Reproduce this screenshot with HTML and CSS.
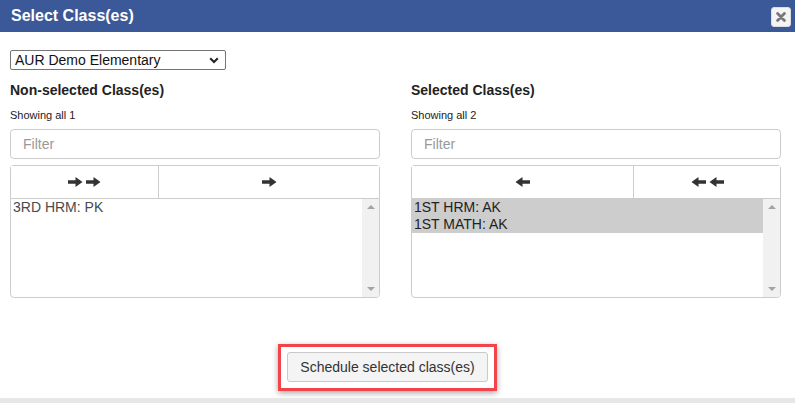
FILE: index.html
```html
<!DOCTYPE html>
<html>
<head>
<meta charset="utf-8">
<link rel="stylesheet" href="styles.css">
</head>
<body>
<div class="dialog">
  <div class="header">
    <span class="title">Select Class(es)</span>
    <button class="close" aria-label="close">
      <svg width="10" height="10" viewBox="0 0 10 10"><path d="M1.6 1.6L8.4 8.4M8.4 1.6L1.6 8.4" stroke="#777" stroke-width="2.8" stroke-linecap="round"/></svg>
    </button>
  </div>
  <div class="content">
    <div class="school">
      <span class="school-name">AUR Demo Elementary</span>
      <svg class="chev" width="10" height="7" viewBox="0 0 10 7"><path d="M1.2 1.2L5 5L8.8 1.2" stroke="#222" stroke-width="2" fill="none"/></svg>
    </div>
    <div class="columns">
      <div class="col">
        <div class="col-title">Non-selected Class(es)</div>
        <div class="info">Showing all 1</div>
        <div class="filter">Filter</div>
        <div class="btn-group">
          <div class="btn narrow">
            <svg width="15" height="10" viewBox="0 0 15 10"><path d="M0 3.3H7.5V0L14.5 5L7.5 10V6.7H0Z" fill="#333"/></svg>
            <svg class="second" width="15" height="10" viewBox="0 0 15 10"><path d="M0 3.3H7.5V0L14.5 5L7.5 10V6.7H0Z" fill="#333"/></svg>
          </div>
          <div class="btn wide">
            <svg width="15" height="10" viewBox="0 0 15 10"><path d="M0 3.3H7.5V0L14.5 5L7.5 10V6.7H0Z" fill="#333"/></svg>
          </div>
        </div>
        <div class="listbox">
          <div class="items">
            <div class="item">3RD HRM: PK</div>
          </div>
          <div class="scrollbar"><span class="up"></span><span class="down"></span></div>
        </div>
      </div>
      <div class="col">
        <div class="col-title">Selected Class(es)</div>
        <div class="info">Showing all 2</div>
        <div class="filter">Filter</div>
        <div class="btn-group">
          <div class="btn wide">
            <svg width="15" height="10" viewBox="0 0 15 10"><path d="M15 3.3H7.5V0L0.5 5L7.5 10V6.7H15Z" fill="#333"/></svg>
          </div>
          <div class="btn narrow">
            <svg width="15" height="10" viewBox="0 0 15 10"><path d="M15 3.3H7.5V0L0.5 5L7.5 10V6.7H15Z" fill="#333"/></svg>
            <svg class="second" width="15" height="10" viewBox="0 0 15 10"><path d="M15 3.3H7.5V0L0.5 5L7.5 10V6.7H15Z" fill="#333"/></svg>
          </div>
        </div>
        <div class="listbox">
          <div class="items">
            <div class="item sel">1ST HRM: AK</div>
            <div class="item sel">1ST MATH: AK</div>
          </div>
          <div class="scrollbar"><span class="up"></span><span class="down"></span></div>
        </div>
      </div>
    </div>
    <div class="footer">
      <div class="highlight">
        <button class="schedule">Schedule selected class(es)</button>
      </div>
    </div>
  </div>
  <div class="bottom-strip"></div>
</div>
</body>
</html>
```
FILE: styles.css
```css
* { box-sizing: border-box; }
html, body { margin: 0; padding: 0; background: #fff; }
body { font-family: "Liberation Sans", Arial, sans-serif; color: #333; width: 795px; height: 403px; overflow: hidden; }
.dialog { display: flex; flex-direction: column; height: 403px; }
.header {
  height: 32px; background: #3b5998; display: flex; align-items: center;
  justify-content: space-between; padding: 0 4px 0 11px;
}
.title { color: #fff; font-weight: bold; font-size: 16px; }
.close {
  width: 20px; height: 20px; margin-top: 1px; padding: 0; border: 1px solid #ddd; border-radius: 3px;
  background: #f4f4f4; display: flex; align-items: center; justify-content: center;
}
.content { flex: 1; padding: 18px 0 0 10px; display: flex; flex-direction: column; }
.school {
  width: 216px; height: 20px; border: 1px solid #767676; border-radius: 2px;
  display: flex; align-items: center; justify-content: space-between;
  padding: 0 6px 0 4px; font-size: 14px; color: #111;
}
.columns { display: grid; grid-template-columns: 370px 370px; column-gap: 31px; margin-top: 12px; }
.col-title { font-size: 14px; font-weight: bold; color: #222; line-height: 16px; }
.info { font-size: 11px; color: #222; margin-top: 11px; line-height: 13px; }
.filter {
  margin-top: 7px; height: 30px; border: 1px solid #ccc; border-radius: 4px;
  font-size: 14px; color: #999; padding: 0 12px; display: flex; align-items: center;
}
.btn-group {
  margin-top: 6px; display: flex; height: 33px; border: 1px solid #ccc; border-bottom: none;
  border-radius: 4px 4px 0 0;
}
.btn { display: flex; align-items: center; justify-content: center; background: #fff; }
.btn.narrow { width: 147px; }
.btn.wide { flex: 1; }
.btn-group .btn + .btn { border-left: 1px solid #ccc; }
.btn .second { margin-left: 3px; }
.listbox {
  height: 100px; border: 1px solid #ccc; border-radius: 0 0 4px 4px; display: flex; overflow: hidden;
}
.items { flex: 1; }
.item { font-size: 14px; line-height: 17px; padding-left: 2px; color: #4a4a4a; }
.item.sel { background: #cdcdcd; color: #222; }
.scrollbar { width: 17px; background: #f1f1f1; position: relative; }
.scrollbar .up, .scrollbar .down {
  position: absolute; left: 5px; width: 0; height: 0;
  border-left: 4px solid transparent; border-right: 4px solid transparent;
}
.scrollbar .up { top: 6px; border-bottom: 4px solid #a3a3a3; }
.scrollbar .down { bottom: 6px; border-top: 4px solid #a3a3a3; }
.footer { display: flex; justify-content: center; padding-right: 30px; margin-top: 46px; }
.highlight {
  border: 3px solid #f2444a; padding: 5px 6px 6px 6px;
  box-shadow: 0 2px 6px rgba(0,0,0,0.35);
}
.schedule {
  width: 201px; height: 30px; background: #f4f4f4; border: 1px solid #c9c9c9; border-radius: 3px;
  font-family: "Liberation Sans", Arial, sans-serif; font-size: 14px; color: #333; padding: 0;
}
.bottom-strip { height: 5px; background: #e7e7e7; }
```
